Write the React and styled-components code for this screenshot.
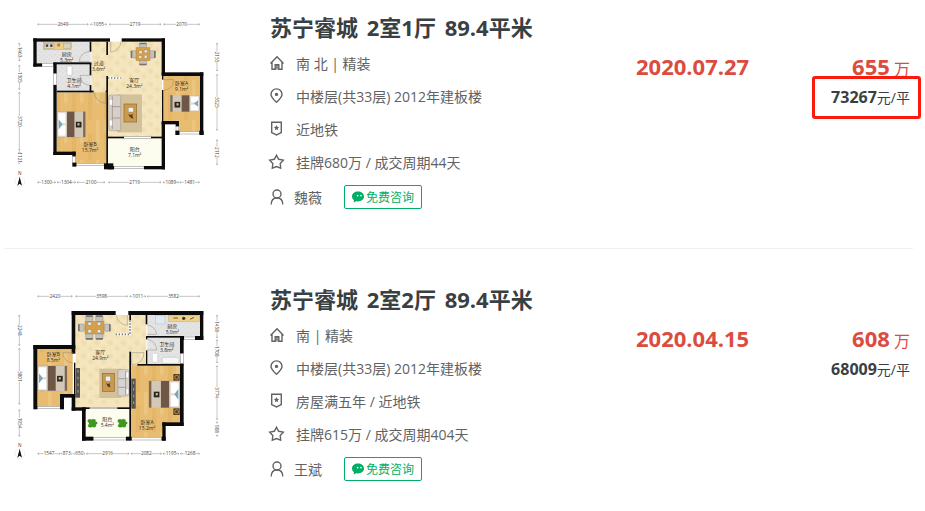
import React from "react";
import styled, { createGlobalStyle } from "styled-components";

const listings = [
  {
    id: 1,
    title: ["苏宁睿城", "2室1厅", "89.4平米"],
    house: "南 北 | 精装",
    position: "中楼层(共33层) 2012年建板楼",
    tags: "近地铁",
    cycle: "挂牌680万 / 成交周期44天",
    agent: "魏薇",
    date: "2020.07.27",
    total: "655",
    unit: "73267",
    marked: true
  },
  {
    id: 2,
    title: ["苏宁睿城", "2室2厅", "89.4平米"],
    house: "南 | 精装",
    position: "中楼层(共33层) 2012年建板楼",
    tags: "房屋满五年 / 近地铁",
    cycle: "挂牌615万 / 成交周期404天",
    agent: "王斌",
    date: "2020.04.15",
    total: "608",
    unit: "68009",
    marked: false
  }
];

// rects are [x, y, width, height]
const plans = {
  1: {
    floors: [
      ["tile", 110, 125, 162, 65],
      ["tile", 170, 193, 102, 80],
      ["stone", 274, 125, 212, 287],
      ["wood", 170, 277, 150, 180],
      ["wood", 225, 450, 95, 42],
      ["wood", 490, 228, 112, 136],
      ["wood", 536, 360, 66, 38],
      ["balcony", 324, 415, 162, 85]
    ],
    walls: [
      [100, 115, 230, 10],
      [365, 115, 130, 10],
      [100, 115, 10, 85],
      [100, 190, 26, 10],
      [160, 188, 10, 32],
      [160, 255, 10, 210],
      [160, 455, 67, 10],
      [217, 455, 10, 14],
      [217, 488, 12, 12],
      [312, 490, 28, 18],
      [324, 498, 18, 10],
      [432, 498, 63, 10],
      [485, 115, 10, 110],
      [485, 217, 125, 11],
      [600, 217, 10, 188],
      [598, 392, 13, 13],
      [527, 363, 10, 16],
      [526, 392, 12, 13],
      [485, 363, 52, 10],
      [485, 366, 10, 142]
    ],
    inner: [
      [269, 125, 5, 30],
      [160, 187, 114, 6],
      [269, 190, 5, 36],
      [269, 255, 5, 22],
      [170, 272, 111, 5],
      [317, 272, 7, 5],
      [319, 125, 5, 40],
      [319, 228, 5, 270],
      [324, 410, 48, 5],
      [453, 410, 34, 5],
      [486, 225, 4, 14],
      [486, 270, 4, 96]
    ],
    windows: [
      [126, 191, 34, 8],
      [161, 220, 8, 35],
      [218, 469, 8, 20],
      [229, 490, 83, 7],
      [342, 499, 90, 7],
      [538, 395, 60, 7],
      [528, 378, 8, 15],
      [372, 410, 81, 5]
    ],
    doors: [
      "M332 125V156A32 32 0 0 0 363 125",
      "M269 155A30 30 0 0 0 238 185H269",
      "M269 226H240A30 30 0 0 0 269 256",
      "M281 275A38 38 0 0 0 317 310V275",
      "M490 239H521A31 31 0 0 1 490 271"
    ],
    dots: "M324 234H362",
    rooms: [
      [200, 168, "厨房", "5.3m²"],
      [296, 196, "过道", "3.6m²"],
      [222, 246, "卫生间", "4.1m²"],
      [403, 247, "客厅", "24.3m²"],
      [545, 256, "卧室A", "9.1m²"],
      [270, 440, "卧室B", "15.7m²"],
      [404, 455, "阳台", "7.1m²"]
    ],
    top: [[112, 266, "2649"], [270, 322, "1055"], [327, 484, "2719"], [490, 600, "2070"]],
    bottom: [
      [112, 168, "1300"],
      [170, 228, "1304"],
      [230, 316, "2100"],
      [324, 484, "2719"],
      [488, 537, "1089"],
      [538, 600, "1481"]
    ],
    left: [[128, 184, "1463"], [194, 270, "1305"], [276, 452, "3720"], [454, 492, "1121"]],
    right: [[128, 214, "2155"], [222, 392, "3525"], [418, 496, "2112"]],
    bottomY: 547
  },
  2: {
    floors: [
      ["stone", 227, 129, 212, 280],
      ["tile", 442, 129, 160, 66],
      ["tile", 442, 196, 100, 82],
      ["wood", 112, 231, 106, 140],
      ["wood", 112, 365, 70, 40],
      ["wood", 393, 280, 149, 175],
      ["wood", 393, 440, 96, 56],
      ["balcony", 257, 411, 131, 86]
    ],
    walls: [
      [215, 117, 132, 12],
      [385, 117, 225, 12],
      [215, 117, 11, 128],
      [100, 219, 126, 12],
      [100, 219, 12, 193],
      [180, 366, 12, 46],
      [180, 366, 46, 11],
      [215, 366, 11, 50],
      [215, 406, 42, 10],
      [246, 406, 11, 100],
      [246, 494, 34, 12],
      [378, 494, 17, 12],
      [485, 494, 12, 12],
      [487, 451, 10, 55],
      [487, 451, 64, 11],
      [540, 192, 11, 52],
      [540, 275, 11, 186],
      [540, 192, 12, 12],
      [585, 192, 25, 12],
      [600, 117, 10, 87]
    ],
    inner: [
      [437, 129, 5, 28],
      [438, 192, 112, 5],
      [438, 192, 4, 10],
      [438, 235, 4, 44],
      [412, 276, 138, 5],
      [388, 239, 5, 258],
      [388, 129, 5, 16],
      [222, 272, 4, 96],
      [255, 406, 14, 5],
      [352, 406, 38, 5]
    ],
    windows: [
      [552, 195, 34, 7],
      [542, 244, 8, 31],
      [112, 403, 69, 7],
      [280, 497, 98, 7],
      [395, 497, 90, 7],
      [269, 406, 83, 4]
    ],
    doors: [
      "M382 129V160A34 34 0 0 1 349 129",
      "M442 159A30 30 0 0 1 470 187H442",
      "M442 202A32 32 0 0 1 470 234H442",
      "M395 278V242H432A35 35 0 0 1 395 278",
      "M219 242H188A32 32 0 0 0 219 273"
    ],
    dots: "M390 145V187H345",
    rooms: [
      [517, 169, "厨房", "5.0m²"],
      [500, 224, "卫生间", "3.8m²"],
      [301, 247, "客厅", "24.9m²"],
      [160, 253, "卧室B", "8.5m²"],
      [322, 449, "阳台", "5.4m²"],
      [441, 456, "卧室A", "15.2m²"]
    ],
    top: [[112, 218, "2420"], [226, 384, "3598"], [388, 439, "1011"], [441, 600, "3582"]],
    bottom: [
      [112, 182, "1547"],
      [182, 218, "873"],
      [220, 256, "650"],
      [258, 388, "2916"],
      [392, 486, "2082"],
      [488, 538, "1195"],
      [540, 600, "1268"]
    ],
    left: [[128, 222, "2248"], [228, 398, "3801"], [412, 494, "1954"]],
    right: [[128, 199, "1458"], [202, 274, "1708"], [280, 444, "3774"], [448, 494, "908"]],
    bottomY: 545
  }
};

const Rects = ({ items, ...rest }) =>
  items.map(([x, y, w, h], i) => (
    <rect key={i} x={x} y={y} width={w} height={h} {...rest} />
  ));

const DimensionX = ({ from, to, y, label }) => {
  const mid = (from + to) / 2;
  return (
    <g>
      <path
        d={`M${from + 5} ${y - 3}l-4 3 4 3M${from + 1} ${y}H${mid - 16}M${mid + 16} ${y}H${to - 1}M${to - 5} ${y - 3}l4 3-4 3`}
        fill="none"
        stroke="#8c8c8c"
        strokeWidth="1.5"
      />
      <DimText x={mid} y={y + 5}>
        {label}
      </DimText>
    </g>
  );
};

const DimensionY = ({ from, to, x, label }) => (
  <g transform={`translate(${x} 0) rotate(90)`}>
    <DimensionX from={from} to={to} y={0} label={label} />
  </g>
);

const Bed = ({ x, y, w, h, flip }) => (
  <g transform={flip ? `translate(${x + w} ${y}) scale(-1 1)` : `translate(${x} ${y})`}>
    <rect width={w} height={h} fill="#ece6da" stroke="#9b8b76" />
    <rect x="2" y="3" width={w * 0.28} height={h / 2 - 5} rx="4" fill="#fff" stroke="#b5b0a8" />
    <rect x="2" y={h / 2 + 2} width={w * 0.28} height={h / 2 - 5} rx="4" fill="#fff" stroke="#b5b0a8" />
    <path d={`M4 ${h * 0.3}l12 ${h * 0.2}-12 ${h * 0.2}z`} fill="#78a7bd" />
    <rect x={w * 0.34} width={w * 0.28} height={h} fill="#6e5747" />
    <rect x={w * 0.62} width={w * 0.3} height={h} fill="#d3c7b8" />
    <rect x={w * 0.92} width={w * 0.08} height={h} fill="#7d6857" />
    <rect x={w * 0.66} y={h * 0.4} width="17" height="17" fill="#29251f" />
    <rect x={w * 0.66 + 5} y={h * 0.4 + 4} width="6" height="7" fill="#c8c0ae" />
  </g>
);

const Chair = ({ x, y, turn = 0 }) => (
  <g transform={`translate(${x} ${y}) rotate(${turn})`}>
    <rect x="-11" y="-8" width="22" height="17" rx="3" fill="#c5c1bb" stroke="#77726c" />
    <rect x="-11" y="-10" width="22" height="5" rx="2" fill="#77736f" />
  </g>
);

const Plant = ({ x, y }) => (
  <g transform={`translate(${x} ${y})`} fill="#3f9a1c" stroke="#2e7a12">
    <ellipse cx="-8" cy="-7" rx="6" ry="5" />
    <ellipse cx="3" cy="-8" rx="7" ry="4" />
    <ellipse cx="-6" cy="7" rx="7" ry="5" />
    <ellipse cx="5" cy="6" rx="6" ry="6" />
    <ellipse cx="9" cy="-1" rx="6" ry="4" />
    <ellipse cx="-1" cy="0" rx="9" ry="7" stroke="none" />
  </g>
);

const Compass = () => (
  <g>
    <circle cx="59" cy="545" r="15" fill="#fff" stroke="#d4d4d4" />
    <path d="M59 530l7 27-7-6-7 6z" fill="#111" />
    <DimText x="59" y="524">
      N
    </DimText>
  </g>
);

const FurnitureOne = () => (
  <g>
    <rect x="130" y="128" width="84" height="20" fill="#ecd089" stroke="#ad9257" />
    <rect x="134" y="130" width="28" height="15" fill="#d7d7d2" stroke="#888" />
    <circle cx="141" cy="137" r="4" fill="#444" />
    <circle cx="154" cy="137" r="4" fill="#444" />
    <circle cx="176" cy="135" r="5" fill="#b98630" />
    <rect x="190" y="130" width="21" height="15" fill="#d8d2c0" stroke="#99917c" />
    <rect x="201" y="198" width="15" height="28" rx="3" fill="#fff" stroke="#999" />
    <Chair x={429} y={138} />
    <Chair x={429} y={186} turn={180} />
    <Chair x={402} y={163} turn={270} />
    <Chair x={457} y={163} turn={90} />
    <rect x="408" y="143" width="42" height="39" fill="#d5a04b" stroke="#9d7231" />
    <path d="M417 152h9v9h-9zM433 150h9v8h-9zM416 167h9v8h-9zM433 166h8v9h-8z" fill="#f1eadb" stroke="#777" />
    <rect x="352" y="283" width="74" height="114" fill="#d3c19c" />
    <rect x="326" y="285" width="36" height="107" rx="5" fill="#d8d0c8" stroke="#7d746c" />
    <path d="M337 289v98M337 320h24M337 354h24" stroke="#8c847c" strokeWidth="2" />
    <rect x="328" y="298" width="9" height="18" rx="3" fill="#fff" stroke="#999" />
    <rect x="328" y="360" width="9" height="18" rx="3" fill="#fff" stroke="#999" />
    <rect x="372" y="312" width="38" height="54" fill="#cb9a4c" stroke="#8f6a2e" strokeWidth="2" />
    <rect x="385" y="323" width="15" height="13" fill="#eef1f0" stroke="#888" />
    <path d="M384 343l9 2 6-4-2 8 4 7-9-3z" fill="#4d3c28" />
    <Bed x={172} y={335} w={84} h={76} />
    <Bed x={511} y={286} w={87} h={49} flip />
  </g>
);

const FurnitureTwo = () => (
  <g>
    <rect x="466" y="130" width="29" height="26" fill="#dfe9f1" stroke="#99a5ae" />
    <rect x="506" y="130" width="93" height="18" fill="#eed28b" stroke="#ad9257" />
    <path d="M520 138h14M570 142l12-6" stroke="#6b5430" strokeWidth="3" />
    <circle cx="551" cy="139" r="5" fill="#39332b" />
    <rect x="457" y="244" width="16" height="27" rx="3" fill="#fff" stroke="#aaa" />
    <rect x="486" y="256" width="51" height="18" rx="4" fill="#f7f7f7" stroke="#999" />
    <Chair x={268} y={140} />
    <Chair x={298} y={140} />
    <Chair x={268} y={193} turn={180} />
    <Chair x={298} y={193} turn={180} />
    <Chair x={244} y={167} turn={270} />
    <Chair x={322} y={167} turn={90} />
    <rect x="255" y="148" width="57" height="38" fill="#d5a04b" stroke="#9d7231" />
    <path d="M264 151h10v9h-10zM292 151h10v9h-10zM264 173h10v9h-10zM292 173h10v9h-10z" fill="#f1eadb" stroke="#777" />
    <rect x="298" y="290" width="66" height="88" fill="#d3c19c" />
    <rect x="227" y="288" width="13" height="89" fill="#56534f" />
    <path d="M234 294v76" stroke="#a6a29c" strokeWidth="3" strokeDasharray="8 12" />
    <rect x="307" y="304" width="36" height="54" fill="#cb9a4c" stroke="#8f6a2e" strokeWidth="2" />
    <rect x="317" y="313" width="14" height="14" fill="#eef1f0" stroke="#888" />
    <path d="M318 334l8 2 5-4-2 8 3 6-8-2z" fill="#4d3c28" />
    <rect x="354" y="293" width="34" height="79" rx="5" fill="#d8d4d0" stroke="#77716b" />
    <path d="M377 297v72M355 320h22M355 346h22" stroke="#8c847c" strokeWidth="2" />
    <rect x="378" y="300" width="8" height="18" rx="3" fill="#fff" stroke="#999" />
    <rect x="378" y="350" width="8" height="17" rx="3" fill="#fff" stroke="#999" />
    <rect x="394" y="320" width="13" height="90" fill="#56534f" />
    <path d="M401 328v76" stroke="#a6a29c" strokeWidth="3" strokeDasharray="8 12" />
    <Bed x={113} y={282} w={88} h={74} />
    <Bed x={447} y={327} w={92} h={80} flip />
    <rect x="520" y="306" width="19" height="20" fill="#5a4023" />
    <circle cx="530" cy="316" r="6" fill="none" stroke="#d8b070" strokeWidth="2" />
    <rect x="520" y="409" width="19" height="20" fill="#5a4023" />
    <circle cx="530" cy="419" r="6" fill="none" stroke="#d8b070" strokeWidth="2" />
    <Plant x={277} y={454} />
    <Plant x={367} y={454} />
  </g>
);

const FloorPlan = ({ id }) => {
  const plan = plans[id];
  return (
    <PlanSvg viewBox="12 36 720 570" aria-hidden="true">
      <defs>
        <pattern id={`wood${id}`} width="48" height="120" patternUnits="userSpaceOnUse">
          <rect width="48" height="120" fill="#e8bd72" />
          <rect width="12" height="70" fill="#ecc57f" />
          <rect x="24" y="40" width="12" height="80" fill="#e4b668" />
          <path d="M12 0v120M24 0v120M36 0v120M48 0v120" stroke="#deb063" strokeWidth="1" />
        </pattern>
        <pattern id={`stone${id}`} width="40" height="40" patternUnits="userSpaceOnUse">
          <rect width="40" height="40" fill="#f4e5bc" />
          <path d="M0 10l12-6 9 8-8 10zM24 26l10-5 6 12-12 4z" fill="#efddb0" />
          <path d="M22 4l8 2-3 8z" fill="#f8edcf" />
        </pattern>
        <pattern id={`tile${id}`} width="16" height="16" patternUnits="userSpaceOnUse">
          <rect width="16" height="16" fill="#e4e4e4" />
          <path d="M2 3h5v4H2zM10 9h4v4h-4z" fill="#dadada" />
        </pattern>
      </defs>
      {plan.floors.map(([kind, x, y, w, h], i) => (
        <rect
          key={i}
          x={x}
          y={y}
          width={w}
          height={h}
          fill={kind === "balcony" ? "#fdfdef" : `url(#${kind}${id})`}
        />
      ))}
      {id === 1 ? <FurnitureOne /> : <FurnitureTwo />}
      <Rects items={plan.windows} fill="#fff" stroke="#a3a3a3" strokeWidth="2" />
      <Rects items={plan.walls} fill="#0b0b0b" />
      <Rects items={plan.inner} fill="#0b0b0b" />
      {plan.doors.map(d => (
        <path key={d} d={d} fill="none" stroke="#94897a" strokeWidth="1.5" />
      ))}
      <path d={plan.dots} fill="none" stroke="#fff" strokeWidth="7" />
      <path d={plan.dots} fill="none" stroke="#777" strokeWidth="5" strokeDasharray="4 5" />
      {plan.rooms.map(([x, y, name, area]) => (
        <g key={name}>
          <RoomText x={x} y={y - 1}>
            {name}
          </RoomText>
          <RoomText x={x} y={y + 17}>
            {area}
          </RoomText>
        </g>
      ))}
      {plan.top.map(([from, to, label]) => (
        <DimensionX key={from} from={from} to={to} y={73} label={label} />
      ))}
      {plan.bottom.map(([from, to, label]) => (
        <DimensionX key={from} from={from} to={to} y={plan.bottomY} label={label} />
      ))}
      {plan.left.map(([from, to, label]) => (
        <DimensionY key={from} from={from} to={to} x={58} label={label} />
      ))}
      {plan.right.map(([from, to, label]) => (
        <DimensionY key={from} from={from} to={to} x={651} label={label} />
      ))}
      <Compass />
    </PlanSvg>
  );
};

const HomeIcon = () => (
  <Icon viewBox="0 0 14 16">
    <path d="M0.5 8.5 7 1.8l6.5 6.7M2 7.4v6.9h3.2v-4.6h3.6v4.6H12V7.4M7 10v4.5" />
  </Icon>
);

const PinIcon = () => (
  <Icon viewBox="0 0 14 16">
    <path d="M6.5 14.3C3 11 1 8.9 1 6.4a5.5 5.5 0 0 1 11 0c0 2.500-2 4.600-5.500 7.900z" />
    <circle cx="6.5" cy="6.4" r="1" fill="currentColor" />
  </Icon>
);

const BadgeIcon = () => (
  <Icon viewBox="0 0 14 16">
    <path d="M1.7 1.2h9.600v10.400L6.500 13.900l-4.800-2.300z" />
    <path
      d="m6.5 4 .8 1.8 1.9.2-1.4 1.3.4 1.9-1.7-1-1.7 1 .4-1.9L3.8 6l1.9-.2z"
      fill="currentColor"
      stroke="none"
    />
  </Icon>
);

const StarIcon = () => (
  <Icon viewBox="0 0 14 16">
    <path d="m6.500 1.300 2.200 4 4.600.8-3.100 3.400.5 4.600-4.200-1.600-4.200 1.600.5-4.600L-.3 6.100l4.600-.8z" />
  </Icon>
);

const UserIcon = () => (
  <Icon viewBox="0 0 14 16">
    <circle cx="7" cy="5" r="4" />
    <path d="M1.2 15.600c0-4 2.200-6.600 5.800-6.600s5.800 2.600 5.800 6.600" />
  </Icon>
);

const ChatIcon = () => (
  <ChatSvg viewBox="0 0 12 12" aria-hidden="true">
    <path d="M6 .6c3.400 0 6 2.100 6 4.900s-2.600 4.900-6 4.900c-.6 0-1.200-.1-1.800-.2L1.600 11.600l.3-2.500C.7 8.200 0 6.900 0 5.500 0 2.700 2.600.6 6 .6z" fill="#00ae66" />
    <circle cx="5.6" cy="4.6" r="0.9" fill="#fff" />
    <circle cx="9" cy="4.6" r="0.9" fill="#fff" />
  </ChatSvg>
);

const Listing = ({ item }) => (
  <Item>
    <FloorPlan id={item.id} />
    <Info>
      <Title>
        <a href="#detail">
          <TitlePart>{item.title[0]}</TitlePart> <TitlePart>{item.title[1]}</TitlePart>{" "}
          {item.title[2]}
        </a>
      </Title>
      <Row>
        <HomeIcon />
        {item.house}
      </Row>
      <Row>
        <PinIcon />
        {item.position}
      </Row>
      <Row>
        <BadgeIcon />
        {item.tags}
      </Row>
      <Row>
        <StarIcon />
        {item.cycle}
      </Row>
      <AgentRow>
        <UserIcon />
        {item.agent}
        <AskButton type="button">
          <ChatIcon />
          免费咨询
        </AskButton>
      </AgentRow>
    </Info>
    <DealDate>{item.date}</DealDate>
    <Price>
      <Total>
        <b>{item.total}</b> 万
      </Total>
      <UnitPrice $marked={item.marked}>
        <b>{item.unit}</b>元/平
      </UnitPrice>
    </Price>
  </Item>
);

const App = () => (
  <Page>
    <GlobalStyle />
    <List>
      {listings.map(item => (
        <Listing key={item.id} item={item} />
      ))}
    </List>
  </Page>
);

export default App;

const GlobalStyle = createGlobalStyle`
  * {
    box-sizing: border-box;
  }
  body {
    margin: 0;
    background: #fff;
    color: #616263;
    font-family: "Open Sans", "Noto Sans CJK SC", sans-serif;
    font-size: 14px;
  }
`;

const Page = styled.main`
  padding: 12px 12px 0 4px;
`;

const List = styled.ul`
  margin: 0;
  padding: 0;
  list-style: none;
`;

const Item = styled.li`
  display: grid;
  grid-template-columns: 240px minmax(0, 1fr) 114px 160px;
  align-items: start;
  padding: 0 3px 35px 0;

  & + & {
    padding-top: 35px;
    border-top: 1px solid #f0f0f0;
  }
`;

const PlanSvg = styled.svg`
  display: block;
  width: 240px;
  height: 190px;
`;

const RoomText = styled.text`
  font-size: 15px;
  text-anchor: middle;
  fill: #2f2a22;
`;

const DimText = styled.text`
  font-size: 14px;
  text-anchor: middle;
  fill: #444;
`;

const Info = styled.div`
  padding-left: 26px;
`;

const Title = styled.h2`
  margin: 0 0 4px;
  font-size: 22px;
  line-height: 30px;
  font-weight: 700;
  white-space: nowrap;

  a {
    color: #394043;
    text-decoration: none;
  }
`;

const TitlePart = styled.span`
  margin-right: 3px;
`;

const Row = styled.div`
  display: flex;
  align-items: center;
  gap: 12px;
  height: 33px;
  white-space: nowrap;
`;

const AgentRow = styled(Row)`
  gap: 10px;
  margin-top: 2px;
`;

const Icon = styled.svg`
  flex: none;
  width: 14px;
  height: 16px;
  overflow: visible;
  fill: none;
  stroke: currentColor;
  stroke-width: 1.4;
`;

const AskButton = styled.button`
  display: flex;
  align-items: center;
  justify-content: center;
  gap: 2px;
  width: 78px;
  height: 24px;
  margin-left: 12px;
  padding: 0;
  border: 1px solid #00ae66;
  border-radius: 2px;
  background: #fff;
  color: #00ae66;
  font-family: inherit;
  font-size: 12px;
  cursor: pointer;
`;

const ChatSvg = styled.svg`
  width: 12px;
  height: 12px;
`;

const DealDate = styled.div`
  padding-top: 38px;
  color: #db4c3f;
  font-size: 22px;
  line-height: 32px;
  font-weight: 700;
`;

const Price = styled.div`
  display: flex;
  flex-direction: column;
  align-items: flex-end;
  padding-top: 38px;
`;

const Total = styled.div`
  height: 32px;
  color: #db4c3f;
  font-size: 16px;
  line-height: 32px;

  b {
    font-size: 22px;
  }
`;

const UnitPrice = styled.div`
  position: relative;
  height: 30px;
  color: #394043;
  line-height: 30px;

  b {
    font-size: 16px;
  }

  &::after {
    content: ${props => (props.$marked ? '""' : "none")};
    position: absolute;
    inset: -6px -11px -7px -19px;
    border: 3px solid #fb1b0d;
    border-radius: 3px;
  }
`;
